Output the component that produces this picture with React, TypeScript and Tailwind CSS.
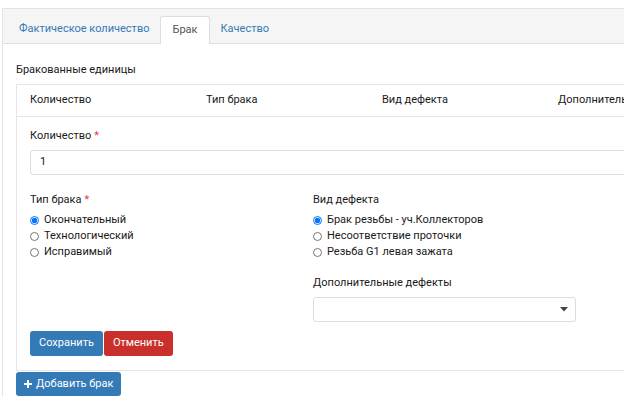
import React from 'react';

const tabs = [
  { label: 'Фактическое количество', active: false },
  { label: 'Брак', active: true },
  { label: 'Качество', active: false },
];

const columns = ['Количество', 'Тип брака', 'Вид дефекта', 'Дополнительные дефекты'];

const defectTypes = ['Окончательный', 'Технологический', 'Исправимый'];
const defectKinds = ['Брак резьбы - уч.Коллекторов', 'Несоответствие проточки', 'Резьба G1 левая зажата'];

function Radio({ label, checked, name }: { label: string; checked: boolean; name: string }) {
  return (
    <label className="flex items-center h-[16px] gap-[5px]">
      <input
        type="radio"
        name={name}
        defaultChecked={checked}
        className="m-0 w-[9px] h-[9px] accent-[#0075ff]"
      />
      <span>{label}</span>
    </label>
  );
}

function Label({ children, required }: { children: React.ReactNode; required?: boolean }) {
  return (
    <div className="h-[16px] leading-[16px]">
      {children}
      {required && <span className="text-[#e4393c] ml-[3px]">*</span>}
    </div>
  );
}

export default function App() {
  return (
    <div
      className="w-[624px] h-[400px] overflow-hidden bg-white text-[11px] text-[#1a1a1a] pt-[8px] pl-[2px]"
      style={{ fontFamily: 'Roboto, "Liberation Sans", sans-serif' }}
    >
      <div className="w-[700px] border-t border-l border-[#e3e3e3]">
        {/* tabs */}
        <div className="h-[35px] bg-[#f5f5f5] border-b border-[#dedede] flex items-end pl-[5px]">
          {tabs.map((t) => (
            <div
              key={t.label}
              className={
                t.active
                  ? 'h-[28px] -mb-px px-[11px] flex items-center bg-white border border-b-0 border-[#dedede] rounded-t-[3px] text-[#555]'
                  : 'h-[27px] px-[11px] flex items-center text-[#337ab7]'
              }
            >
              {t.label}
            </div>
          ))}
        </div>

        {/* content */}
        <div className="pl-[13px]">
          <div className="h-[16px] leading-[16px] mt-[18px] mb-[6px]">Бракованные единицы</div>

          <div className="border-t border-l border-b border-[#e6e6e6]">
            <div className="h-[32px] border-b border-[#e6e6e6] grid grid-cols-[176px_176px_176px_176px] items-center pl-[13px]">
              {columns.map((c) => (
                <div key={c} className="whitespace-nowrap">{c}</div>
              ))}
            </div>

            <div className="pl-[13px] pt-[11px] pb-[14px]">
              <Label required>Количество</Label>
              <div className="mt-[6px] h-[25px] w-[700px] border border-[#dcdcdc] rounded-[3px] flex items-center pl-[9px]">
                1
              </div>

              <div className="grid grid-cols-[283px_263px] mt-[17px]">
                <div>
                  <Label required>Тип брака</Label>
                  <div className="mt-[4px]">
                    {defectTypes.map((d, i) => (
                      <Radio key={d} name="type" label={d} checked={i === 0} />
                    ))}
                  </div>
                </div>
                <div>
                  <Label>Вид дефекта</Label>
                  <div className="mt-[4px]">
                    {defectKinds.map((d, i) => (
                      <Radio key={d} name="kind" label={d} checked={i === 0} />
                    ))}
                  </div>
                  <div className="mt-[15px]">
                    <Label>Дополнительные дефекты</Label>
                  </div>
                  <div className="mt-[6px] h-[25px] w-[263px] border border-[#dcdcdc] rounded-[3px] flex items-center justify-end pr-[7px]">
                    <svg width="8" height="5" viewBox="0 0 8 5">
                      <path d="M0 0h8L4 4.5z" fill="#444" />
                    </svg>
                  </div>
                </div>
              </div>

              <div className="flex gap-[1px] mt-[9px]">
                <button className="h-[25px] px-[9px] bg-[#337ab7] text-white rounded-[3px]">Сохранить</button>
                <button className="h-[25px] px-[9px] bg-[#c9302c] text-white rounded-[3px]">Отменить</button>
              </div>
            </div>
          </div>

          <button className="mt-[1px] h-[24px] pl-[8px] pr-[8px] bg-[#337ab7] text-white rounded-[3px] flex items-center gap-[4px]">
            <svg width="8" height="8" viewBox="0 0 8 8">
              <path d="M3 0h2v3h3v2H5v3H3V5H0V3h3z" fill="white" />
            </svg>
            Добавить брак
          </button>
        </div>
      </div>
    </div>
  );
}
